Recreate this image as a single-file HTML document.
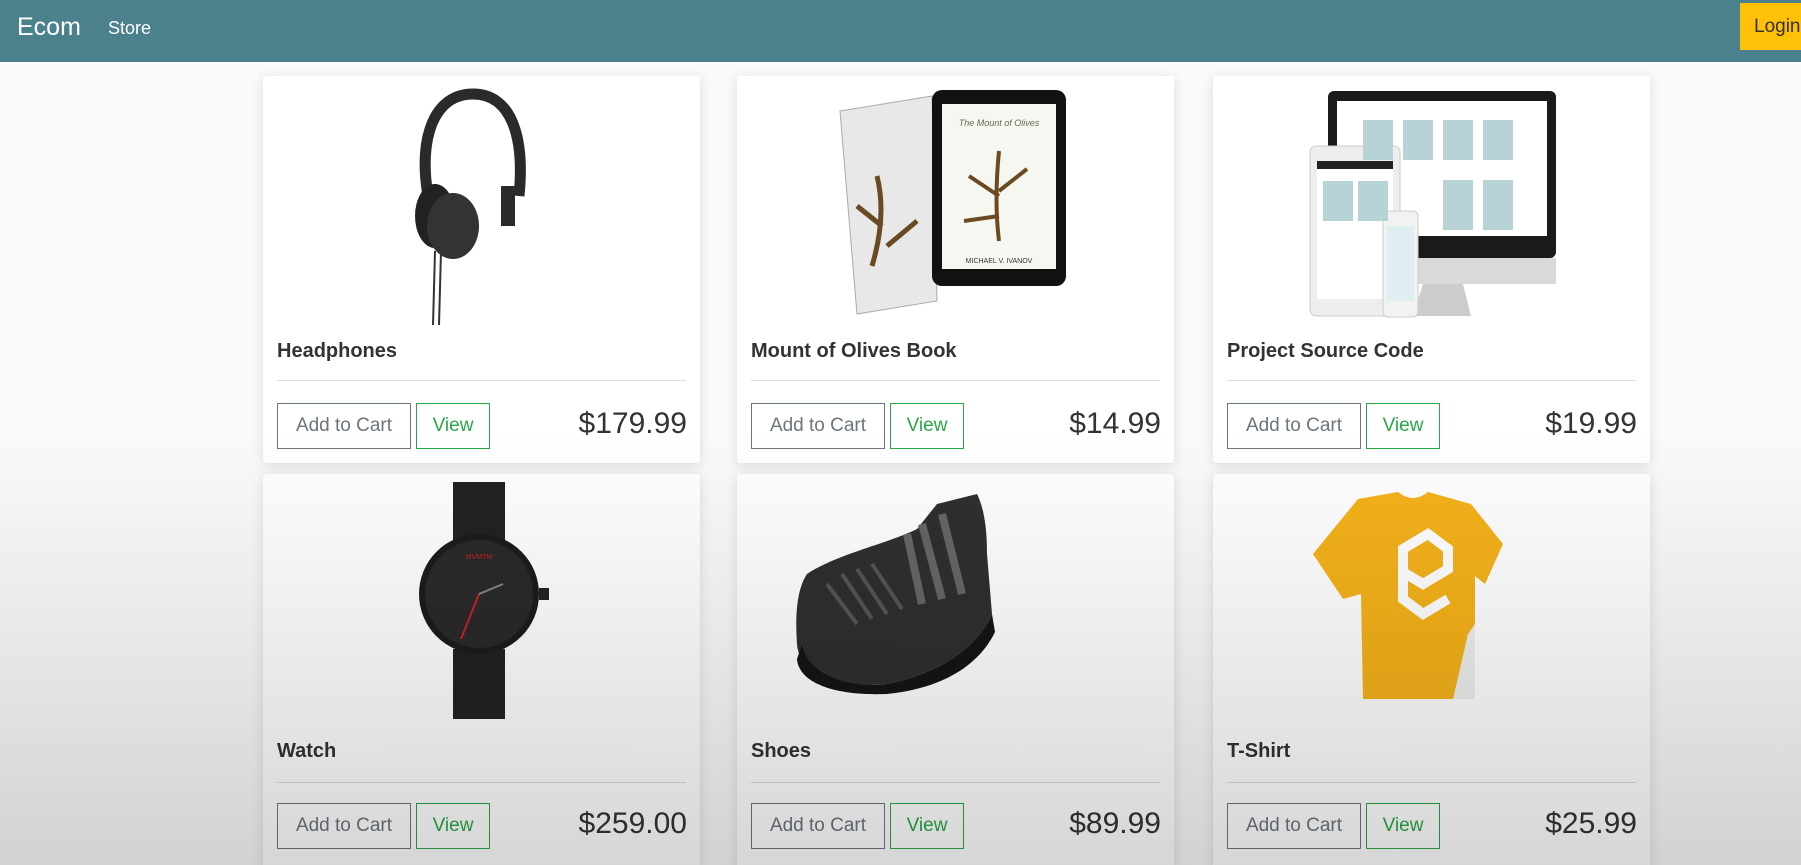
<!DOCTYPE html>
<html style="overflow:hidden;height:865px"><head><meta charset="utf-8"><style>
*{box-sizing:border-box;margin:0;padding:0}
body{width:1801px;height:865px;overflow:hidden;background:#fafafa;font-family:"Liberation Sans",sans-serif;position:relative}
.nav{position:absolute;left:0;top:0;width:1801px;height:62px;background:#4b818c}
.brand{position:absolute;left:17px;top:13px;color:#fff;font-size:25px}
.store{position:absolute;left:108px;top:18px;color:#fff;font-size:18px}
.login{position:absolute;left:1740px;top:3px;width:61px;height:47px;background:#ffc107;color:#333;font-size:19px;padding:13px 0 0 14px;overflow:hidden;white-space:nowrap}
.card{position:absolute;width:437px;height:387px;background:#fff;border-radius:3px;box-shadow:0 2px 12px rgba(0,0,0,.13)}
.card h5{position:absolute;left:14px;top:264px;font-size:20px;font-weight:bold;color:#333}
.card hr{position:absolute;left:14px;right:14px;top:304px;border:0;border-top:1px solid #ddd}
.b1{position:absolute;left:14px;top:327px;width:134px;height:46px;border:1px solid #6c757d;color:#6c757d;font-size:19px;text-align:center;line-height:44px}
.b2{position:absolute;left:153px;top:327px;width:74px;height:46px;border:1px solid #28a745;color:#28a745;font-size:19px;text-align:center;line-height:44px}
.pr{position:absolute;right:13px;top:331px;font-size:30px;color:#333}
.img{position:absolute;left:0;top:0}
.fade{position:absolute;left:0;top:0;width:1801px;height:865px;pointer-events:none;background:linear-gradient(to bottom,rgba(0,0,0,0) 0,rgba(0,0,0,0) 430px,rgba(0,0,0,.06) 600px,rgba(0,0,0,.16) 865px)}
</style></head><body>
<div class="nav"><div class="brand">Ecom</div><div class="store">Store</div><div class="login">Login</div></div>

<div class="card" style="left:263px;top:76px">
<svg class="img" width="437" height="260"><path d="M165 120 C155 60 172 18 210 18 C248 18 262 60 256 120" fill="none" stroke="#2a2a2a" stroke-width="11"/><ellipse cx="172" cy="140" rx="20" ry="32" fill="#222"/><ellipse cx="190" cy="150" rx="26" ry="33" fill="#333"/><rect x="238" y="110" width="14" height="40" fill="#2a2a2a"/><line x1="172" y1="175" x2="170" y2="249" stroke="#333" stroke-width="2"/><line x1="178" y1="175" x2="176" y2="249" stroke="#333" stroke-width="2"/></svg>
<h5>Headphones</h5><hr><div class="b1">Add to Cart</div><div class="b2">View</div><div class="pr">$179.99</div></div>

<div class="card" style="left:737px;top:76px">
<svg class="img" width="437" height="260"><path d="M103 35 L195 20 L200 225 L120 238 Z" fill="#e8e8e8" stroke="#aaa"/><path d="M140 100 q10 40 -5 90 M145 150 l-25 -20 M150 170 l30 -25" stroke="#6b4a22" stroke-width="5" fill="none"/><rect x="195" y="14" width="134" height="196" rx="10" fill="#111"/><rect x="205" y="28" width="114" height="165" fill="#f7f7f2"/><path d="M262 165 q-5 -40 0 -90 M262 120 l-30 -20 M262 115 l28 -22 M262 140 l-35 5" stroke="#6b4a22" stroke-width="4" fill="none"/><text x="262" y="50" font-size="9" text-anchor="middle" fill="#665" font-style="italic">The Mount of Olives</text><text x="262" y="187" font-size="7" text-anchor="middle" fill="#333">MICHAEL V. IVANOV</text></svg>
<h5>Mount of Olives Book</h5><hr><div class="b1">Add to Cart</div><div class="b2">View</div><div class="pr">$14.99</div></div>

<div class="card" style="left:1213px;top:76px">
<svg class="img" width="437" height="260"><rect x="115" y="15" width="228" height="167" rx="6" fill="#1a1a1a"/><rect x="124" y="25" width="210" height="135" fill="#fff"/><rect x="115" y="182" width="228" height="26" fill="#d9d9d9"/><path d="M210 208 L250 208 L258 240 L200 240 Z" fill="#ccc"/><rect x="97" y="70" width="90" height="170" rx="6" fill="#eee" stroke="#ccc"/><rect x="104" y="85" width="76" height="138" fill="#fff"/><rect x="104" y="85" width="76" height="8" fill="#222"/><rect x="170" y="135" width="35" height="106" rx="5" fill="#f2f2f2" stroke="#ccc"/><rect x="174" y="150" width="27" height="75" fill="#dfeef0"/><g fill="#b8d3d6"><rect x="150" y="44" width="30" height="40"/><rect x="190" y="44" width="30" height="40"/><rect x="230" y="44" width="30" height="40"/><rect x="270" y="44" width="30" height="40"/><rect x="230" y="104" width="30" height="50"/><rect x="270" y="104" width="30" height="50"/><rect x="110" y="105" width="30" height="40"/><rect x="145" y="105" width="30" height="40"/></g></svg>
<h5>Project Source Code</h5><hr><div class="b1">Add to Cart</div><div class="b2">View</div><div class="pr">$19.99</div></div>

<div class="card" style="left:263px;top:474px;height:395px">
<svg class="img" width="437" height="260"><rect x="190" y="8" width="52" height="60" fill="#222"/><rect x="190" y="175" width="52" height="70" fill="#222"/><circle cx="216" cy="120" r="60" fill="#1c1c1c"/><circle cx="216" cy="120" r="54" fill="#2a2a2a"/><line x1="216" y1="120" x2="198" y2="165" stroke="#c22" stroke-width="2"/><line x1="216" y1="120" x2="240" y2="110" stroke="#888" stroke-width="2"/><rect x="276" y="114" width="10" height="12" fill="#222"/><text x="216" y="85" font-size="7" fill="#c22" text-anchor="middle">MVMTM</text></svg>
<h5 style="top:266px">Watch</h5><hr style="top:308px"><div class="b1" style="top:329px">Add to Cart</div><div class="b2" style="top:329px">View</div><div class="pr" style="top:333px">$259.00</div></div>

<div class="card" style="left:737px;top:474px;height:395px">
<svg class="img" width="437" height="260"><path d="M70 100 C100 80 150 70 180 55 L200 30 L240 20 C250 40 250 70 250 80 L255 140 C240 175 200 200 150 210 C100 215 62 200 60 170 C58 140 60 115 70 100 Z" fill="#2f2f2f"/><path d="M65 170 C70 200 110 215 150 210 C200 200 240 175 255 140 L258 158 C240 195 200 215 150 220 C100 222 62 210 60 185 Z" fill="#151515"/><path d="M170 60 L185 130 M185 50 L205 125 M205 40 L225 120" stroke="#666" stroke-width="8"/><path d="M90 110 L120 150 M105 100 L135 145 M120 95 L150 140 M135 90 L165 135" stroke="#555" stroke-width="4"/></svg>
<h5 style="top:266px">Shoes</h5><hr style="top:308px"><div class="b1" style="top:329px">Add to Cart</div><div class="b2" style="top:329px">View</div><div class="pr" style="top:333px">$89.99</div></div>

<div class="card" style="left:1213px;top:474px;height:395px">
<svg class="img" width="437" height="260"><path d="M145 25 L185 18 Q200 30 215 18 L258 30 L290 70 L272 110 L262 102 L262 225 L150 225 L148 120 L130 125 L100 80 Z" fill="#f5b21a"/><path d="M190 75 L215 60 L235 75 L235 95 L210 110 L190 98 Z M190 98 L190 125 L210 140 L235 125" fill="none" stroke="#fff" stroke-width="10"/><path d="M255 160 L262 150 L262 225 L240 225 Z" fill="#eee"/></svg>
<h5 style="top:266px">T-Shirt</h5><hr style="top:308px"><div class="b1" style="top:329px">Add to Cart</div><div class="b2" style="top:329px">View</div><div class="pr" style="top:333px">$25.99</div></div>

<div class="fade"></div>
</body></html>
